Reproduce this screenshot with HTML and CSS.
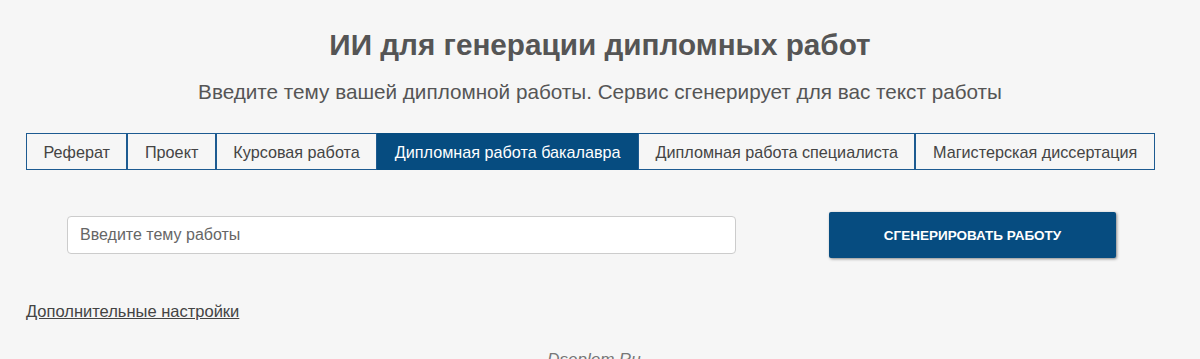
FILE: index.html
```html
<!DOCTYPE html>
<html lang="ru">
<head>
  <meta charset="UTF-8">
  <title>ИИ для генерации дипломных работ</title>
  <link rel="stylesheet" href="styles.css">
</head>
<body>
  <div class="page">
    <h1 class="title">ИИ для генерации дипломных работ</h1>
    <p class="subtitle">Введите тему вашей дипломной работы. Сервис сгенерирует для вас текст работы</p>

    <div class="tabs">
      <a class="tab" href="#">Реферат</a>
      <a class="tab" href="#">Проект</a>
      <a class="tab" href="#">Курсовая работа</a>
      <a class="tab active" href="#">Дипломная работа бакалавра</a>
      <a class="tab" href="#">Дипломная работа специалиста</a>
      <a class="tab" href="#">Магистерская диссертация</a>
    </div>

    <form class="gen-form" onsubmit="return false">
      <div class="field">
        <input type="text" class="topic" placeholder="Введите тему работы">
      </div>
      <div class="action">
        <button type="submit" class="btn-gen">Сгенерировать работу</button>
      </div>
    </form>

    <a class="more" href="#">Дополнительные настройки</a>

    <div class="footer">Dseplom.Ru</div>
  </div>
</body>
</html>
```

FILE: styles.css
```css
body {
  margin: 0;
  background: #f6f6f6;
  font-family: "Liberation Sans", Arial, sans-serif;
  color: #555;
}
.page {
  padding: 0 26px;
}
.title {
  margin: 0;
  padding-top: 27px;
  font-size: 29.7px;
  line-height: 36px;
  font-weight: bold;
  text-align: center;
  color: #555;
}
.subtitle {
  margin: 0;
  padding-top: 16px;
  font-size: 20.7px;
  line-height: 26px;
  text-align: center;
  color: #555;
}
.tabs {
  display: flex;
  margin-top: 28px;
}
.tab {
  display: block;
  padding: 0 16.5px;
  height: 35px;
  line-height: 36px;
  border: 1px solid #1d5b91;
  background: #f6f6f6;
  color: #444;
  font-size: 16.2px;
  text-decoration: none;
  white-space: nowrap;
}
.tab.active {
  background: #064c80;
  border-color: #064c80;
  color: #fff;
}
.gen-form {
  display: flex;
  align-items: center;
  margin-top: 42px;
}
.field {
  padding-left: 41px;
  width: 669px;
}
.topic {
  width: 100%;
  height: 38px;
  padding: 0 12px;
  box-sizing: border-box;
  border: 1px solid #ccc;
  border-radius: 4px;
  background: #fff;
  font-family: "Liberation Sans", Arial, sans-serif;
  font-size: 16px;
  color: #333;
}
.topic::placeholder {
  color: #666;
}
.action {
  padding-left: 93px;
}
.btn-gen {
  width: 287px;
  height: 46px;
  border: none;
  border-radius: 2px;
  background: #064c80;
  color: #fff;
  font-family: "Liberation Sans", Arial, sans-serif;
  font-size: 13.5px;
  font-weight: bold;
  text-transform: uppercase;
  box-shadow: 1px 1px 3px rgba(0, 0, 0, 0.45);
  cursor: pointer;
}
.more {
  display: inline-block;
  margin-top: 44px;
  font-size: 16.5px;
  color: #444;
  text-decoration: underline;
}
.footer {
  margin-top: 29px;
  padding-right: 12px;
  text-align: center;
  font-size: 17px;
  font-style: italic;
  color: #777;
}
```
